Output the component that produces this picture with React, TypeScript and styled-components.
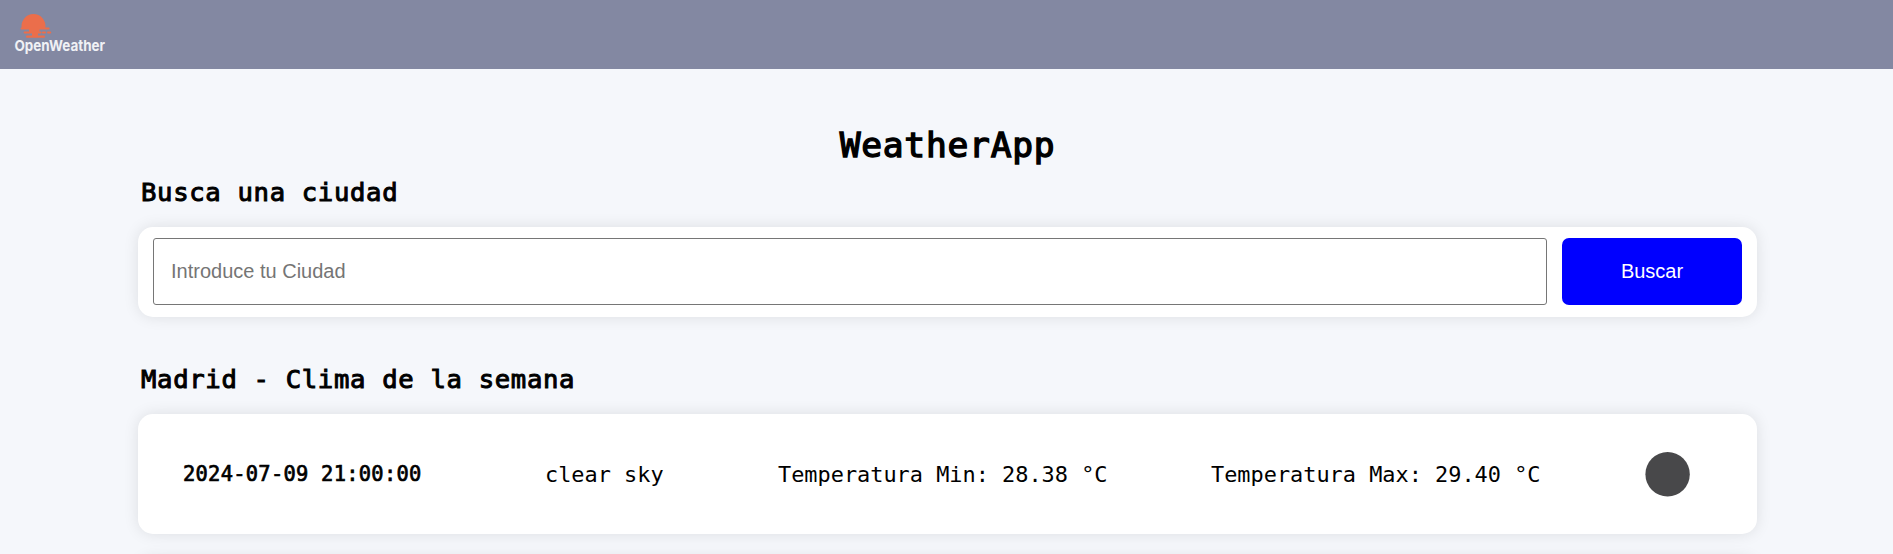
import React from "react";
import styled, { createGlobalStyle } from "styled-components";

const GlobalStyle = createGlobalStyle`
  *, *::before, *::after { box-sizing: border-box; }
  body {
    margin: 0;
    background: #f5f7fb;
    color: #000;
    font-family: Consolas, "DejaVu Sans Mono", monospace;
    overflow: hidden;
  }
`;

const Page = styled.div`
  height: 100vh;
  overflow: hidden;
`;

const Header = styled.header`
  height: 69px;
  padding: 12px 14px;
  background: #8388a2;
`;

const Logo = styled.svg`
  display: block;
  width: 94px;
  height: 50px;
  overflow: visible;
`;

const Main = styled.main`
  width: 1619px;
  margin: 0 auto 0 138px;
  padding-top: 51px;
`;

const Title = styled.h1`
  margin: 0;
  height: 50px;
  font-size: 34.6px;
  letter-spacing: 0.75px;
  line-height: 50px;
  font-weight: 400;
  text-align: center;
  -webkit-text-stroke: 1.4px #000;
`;

const SectionTitle = styled.h2`
  margin: 0 0 15px 3px;
  height: 42px;
  font-size: 25.6px;
  letter-spacing: 0.67px;
  line-height: 44px;
  font-weight: 400;
  -webkit-text-stroke: 1px #000;
`;

const Card = styled.div`
  background: #fff;
  border-radius: 15px;
  box-shadow: 0 0 15px rgba(0, 0, 0, 0.1);
`;

const SearchForm = styled(Card)`
  display: flex;
  gap: 15px;
  height: 90px;
  margin-bottom: 40px;
  padding: 11px 15px 12px;
`;

const CityInput = styled.input`
  flex: 1;
  min-width: 0;
  padding: 0 17px;
  border: 1px solid #767676;
  border-radius: 3px;
  background: #fff;
  font: 20px "Liberation Sans", Arial, sans-serif;
  &::placeholder { color: #757575; }
`;

const SearchButton = styled.button`
  width: 180px;
  padding: 0;
  border: 0;
  border-radius: 7px;
  background: #0000ff;
  color: #fff;
  font: 20px "Liberation Sans", Arial, sans-serif;
`;

const ForecastList = styled.div`
  display: flex;
  flex-direction: column;
  gap: 24px;
`;

const ForecastRow = styled(Card)`
  display: grid;
  grid-template-columns: 362px 233px 433px 407px 100px;
  align-items: center;
  height: 120px;
  padding-left: 45px;
  font-size: 21.9px;
  white-space: nowrap;
`;

const DateText = styled.span`
  font-size: 20.4px;
  letter-spacing: 0.28px;
  -webkit-text-stroke: 0.7px #000;
`;

const ConditionIcon = styled.svg`
  width: 100px;
  height: 100px;
`;

const forecasts = [
  { date: "2024-07-09 21:00:00", sky: "clear sky", min: "28.38", max: "29.40" },
];

const OpenWeatherLogo = () => (
  <Logo viewBox="0 0 94 50">
    <g fill="#eb6e4b">
      <path d="M7.6 15.6A12 12 0 1 1 31.4 15.6H34.6a1 1 0 0 1 0 2H25.5V19.6H26.5a1 1 0 0 1 0 2H24V23.6H30a1 1 0 0 1 0 2.1H13a1 1 0 0 1 0-2.1H18V21.6H10.6a1 1 0 0 1 0-2H15V17.6H7.6a1 1 0 0 1 0-2z" />
      <rect x="27.8" y="19.6" width="4.2" height="2" rx="1" />
      <rect x="33" y="19.6" width="4.2" height="2" rx="1" />
    </g>
    <text
      x="0.5"
      y="39"
      fill="#f0f1f5"
      fontFamily="Inter, sans-serif"
      fontSize="15.2"
      fontWeight="700"
      textLength="90.5"
      lengthAdjust="spacingAndGlyphs"
    >
      OpenWeather
    </text>
  </Logo>
);

export default function App() {
  return (
    <Page>
      <GlobalStyle />
      <Header>
        <OpenWeatherLogo />
      </Header>
      <Main>
        <Title>WeatherApp</Title>
        <SectionTitle>Busca una ciudad</SectionTitle>
        <SearchForm>
          <CityInput placeholder="Introduce tu Ciudad" />
          <SearchButton>Buscar</SearchButton>
        </SearchForm>
        <SectionTitle>Madrid - Clima de la semana</SectionTitle>
        <ForecastList>
          {forecasts.map((f) => (
            <ForecastRow key={f.date}>
              <DateText>{f.date}</DateText>
              <span>{f.sky}</span>
              <span>Temperatura Min: {f.min} °C</span>
              <span>Temperatura Max: {f.max} °C</span>
              <ConditionIcon viewBox="0 0 100 100">
                <circle cx="49.6" cy="50.3" r="22.2" fill="#48484a" />
              </ConditionIcon>
            </ForecastRow>
          ))}
          <ForecastRow />
        </ForecastList>
      </Main>
    </Page>
  );
}
